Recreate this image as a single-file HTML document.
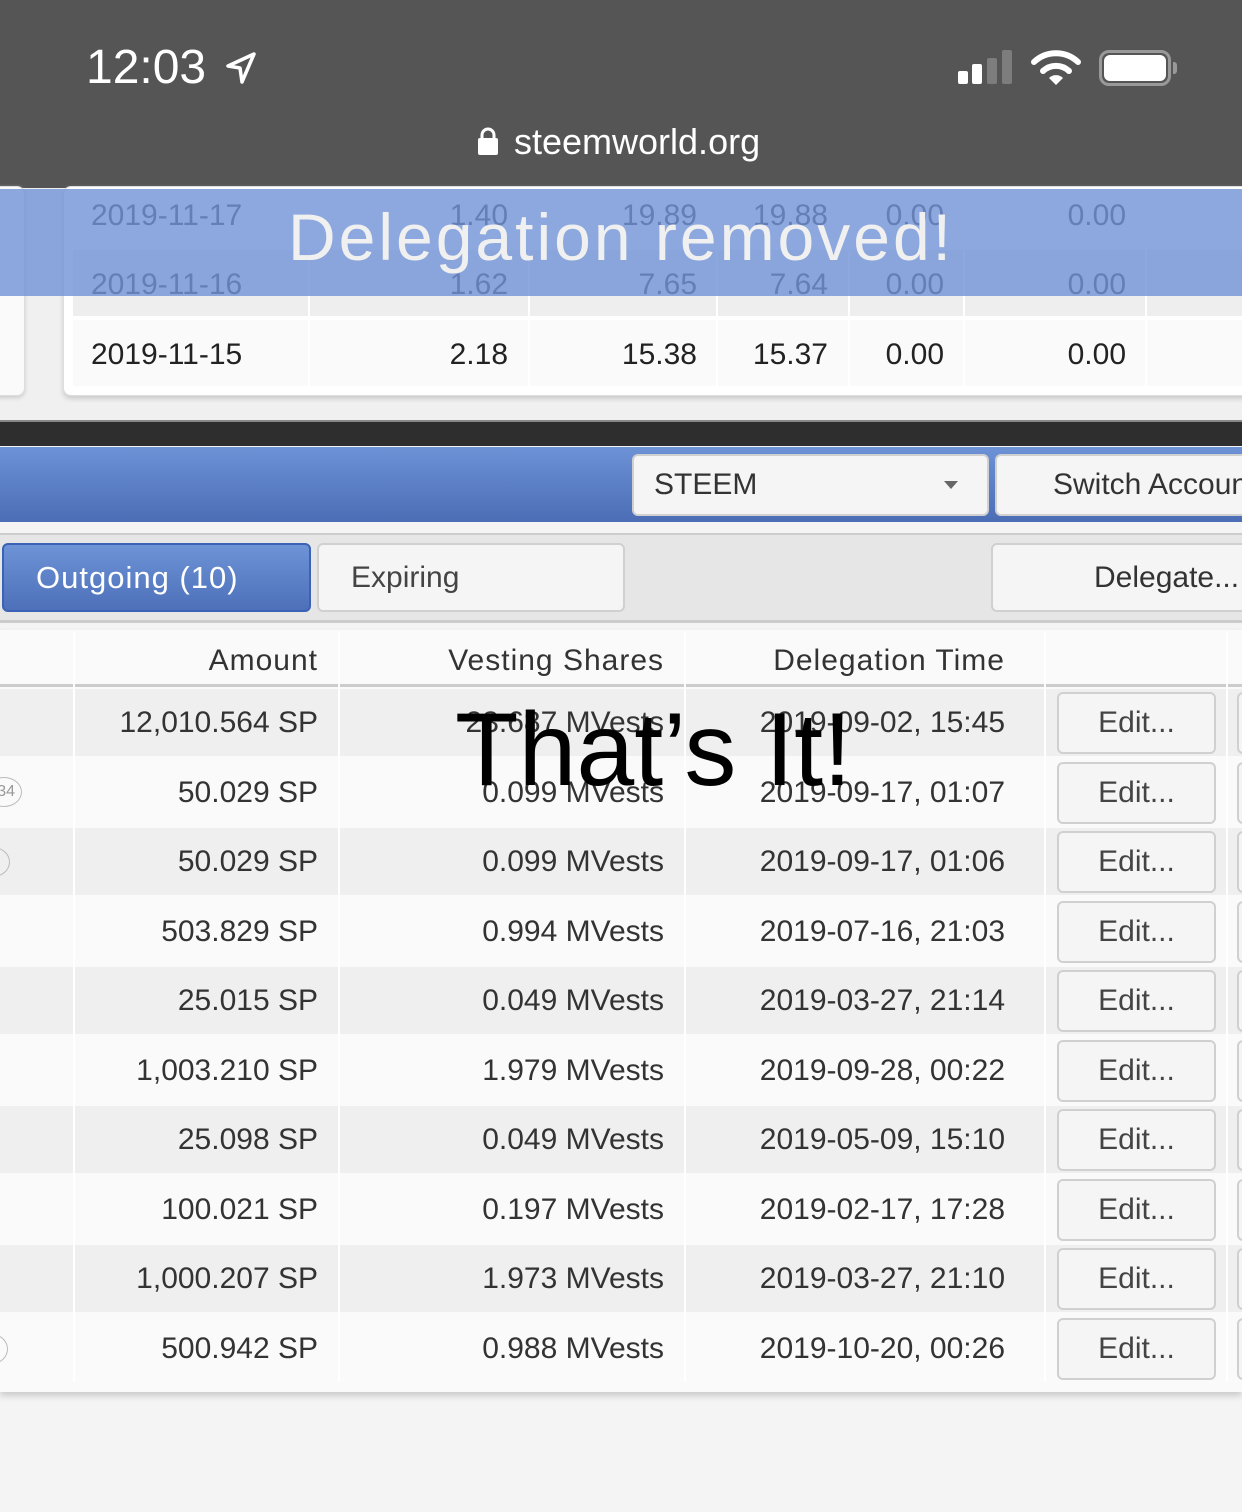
<!DOCTYPE html>
<html><head><meta charset="utf-8"><style>
*{margin:0;padding:0;box-sizing:border-box}
html,body{width:1242px;height:1512px;overflow:hidden}
body{background:#f4f4f4;font-family:"Liberation Sans",sans-serif;position:relative;color:#333}
.a{position:absolute}
.r{position:absolute;text-align:right;font-size:30px;line-height:70px;white-space:nowrap}
.btn{position:absolute;background:#f5f5f5;border:2px solid #d0d0d0;border-radius:6px;font-size:30px;color:#444;text-align:center;overflow:hidden;white-space:nowrap}
.box{position:absolute;left:0;width:1242px;height:760px}
</style></head><body>
<!-- status bar -->
<div class="a" style="left:0;top:0;width:1242px;height:188px;background:#555"></div>
<div class="a" style="left:86px;top:40px;font-size:48px;color:#fff;line-height:56px">12:03</div>
<svg class="a" style="left:224px;top:50px" width="36" height="36" viewBox="0 0 36 36"><path d="M30 4 L4 16 L16 18 L18 32 Z" fill="none" stroke="#fff" stroke-width="3.5" stroke-linejoin="round"/></svg>
<div class="a" style="left:958px;top:71px;width:10px;height:13px;background:#fff;border-radius:2px"></div>
<div class="a" style="left:972px;top:64px;width:10px;height:20px;background:#fff;border-radius:2px"></div>
<div class="a" style="left:987px;top:58px;width:10px;height:26px;background:#7d7d7d;border-radius:2px"></div>
<div class="a" style="left:1002px;top:50px;width:10px;height:34px;background:#7d7d7d;border-radius:2px"></div>
<svg class="a" style="left:1030px;top:48px" width="52" height="38" viewBox="0 0 52 38"><path d="M4 14 A32 32 0 0 1 48 14" fill="none" stroke="#fff" stroke-width="6" stroke-linecap="round"/><path d="M13 23 A19 19 0 0 1 39 23" fill="none" stroke="#fff" stroke-width="6" stroke-linecap="round"/><path d="M19 30 L26 37 L33 30 A10 10 0 0 0 19 30Z" fill="#fff"/></svg>
<div class="a" style="left:1099px;top:50px;width:72px;height:36px;border:3px solid #999;border-radius:10px"></div>
<div class="a" style="left:1104px;top:55px;width:62px;height:26px;background:#fff;border-radius:6px"></div>
<div class="a" style="left:1173px;top:62px;width:4px;height:12px;background:#999;border-radius:0 3px 3px 0"></div>
<svg class="a" style="left:477px;top:126px" width="22" height="30" viewBox="0 0 22 30"><path d="M5 13 V9 A6 6 0 0 1 17 9 V13" fill="none" stroke="#fff" stroke-width="3"/><rect x="1" y="12" width="20" height="17" rx="2" fill="#fff"/></svg>
<div class="a" style="left:514px;top:120px;font-size:36px;color:#fff;line-height:44px">steemworld.org</div>

<!-- top table -->
<div class="a" style="left:0;top:188px;width:1242px;height:232px;background:#f0f0f0"></div>
<div class="a" style="left:-20px;top:186px;width:45px;height:210px;background:#fafafa;border:1px solid #ddd;border-radius:8px;box-shadow:0 2px 4px #ccc"></div>
<div class="a" style="left:63px;top:186px;width:1200px;height:210px;background:#fff;border:1px solid #ddd;border-radius:8px;box-shadow:0 3px 5px #ccc"></div>
<div class="a" style="left:73px;top:250px;width:1169px;height:66px;background:#eee"></div>
<div class="a" style="left:73px;top:320px;width:1169px;height:66px;background:#fafafa"></div>
<div class="a" style="left:308px;top:188px;width:2px;height:200px;background:#fff"></div>
<div class="a" style="left:528px;top:188px;width:2px;height:200px;background:#fff"></div>
<div class="a" style="left:716px;top:188px;width:2px;height:200px;background:#fff"></div>
<div class="a" style="left:848px;top:188px;width:2px;height:200px;background:#fff"></div>
<div class="a" style="left:963px;top:188px;width:2px;height:200px;background:#fff"></div>
<div class="a" style="left:1145px;top:188px;width:2px;height:200px;background:#fff"></div>
<div class="r" style="left:91px;top:181px;text-align:left">2019-11-17</div>
<div class="r" style="right:734px;top:181px">1.40</div>
<div class="r" style="right:545px;top:181px">19.89</div>
<div class="r" style="right:414px;top:181px">19.88</div>
<div class="r" style="right:298px;top:181px">0.00</div>
<div class="r" style="right:116px;top:181px">0.00</div>
<div class="r" style="left:91px;top:250px;text-align:left">2019-11-16</div>
<div class="r" style="right:734px;top:250px">1.62</div>
<div class="r" style="right:545px;top:250px">7.65</div>
<div class="r" style="right:414px;top:250px">7.64</div>
<div class="r" style="right:298px;top:250px">0.00</div>
<div class="r" style="right:116px;top:250px">0.00</div>
<div class="r" style="left:91px;top:320px;text-align:left;color:#222">2019-11-15</div>
<div class="r" style="right:734px;top:320px;color:#222">2.18</div>
<div class="r" style="right:545px;top:320px;color:#222">15.38</div>
<div class="r" style="right:414px;top:320px;color:#222">15.37</div>
<div class="r" style="right:298px;top:320px;color:#222">0.00</div>
<div class="r" style="right:116px;top:320px;color:#222">0.00</div>
<div class="a" style="left:0;top:189px;width:1242px;height:107px;background:rgba(112,146,214,0.8)"></div>
<div class="a" style="left:0;top:195px;width:1242px;text-align:center;font-size:66px;color:#f0f0f0;line-height:84px;letter-spacing:3px">Delegation removed!</div>

<!-- dark bar + blue header -->
<div class="a" style="left:0;top:420px;width:1242px;height:26px;background:#2e2e2e;border-top:2px solid #888"></div>
<div class="a" style="left:0;top:447px;width:1242px;height:75px;background:linear-gradient(#6d92d6,#4b6db5)"></div>
<div class="btn" style="left:632px;top:454px;width:357px;height:62px;line-height:58px;text-align:left;padding-left:20px;color:#333">STEEM</div>
<div class="a" style="left:944px;top:481px;width:0;height:0;border-left:7px solid transparent;border-right:7px solid transparent;border-top:8px solid #666"></div>
<div class="btn" style="left:995px;top:454px;width:247px;height:62px;line-height:58px;text-align:left;padding-left:56px;color:#333;border-right:none;border-radius:6px 0 0 6px">Switch Account</div>

<!-- toolbar -->
<div class="a" style="left:0;top:533px;width:1242px;height:90px;background:#e6e6e6;border-top:2px solid #ccc;border-bottom:3px solid #ccc"></div>
<div class="a" style="left:2px;top:543px;width:309px;height:69px;background:linear-gradient(#6e93d6,#4d70b9);border:2px solid #3b62b5;border-radius:6px;color:#fff;font-size:31px;line-height:66px;padding-left:32px;letter-spacing:1px">Outgoing (10)</div>
<div class="btn" style="left:317px;top:543px;width:308px;height:69px;line-height:66px;text-align:left;padding-left:32px">Expiring</div>
<div class="btn" style="left:991px;top:543px;width:251px;height:69px;line-height:66px;text-align:left;padding-left:101px;color:#333;border-right:none;border-radius:6px 0 0 6px">Delegate...</div>

<!-- main table -->
<div class="a" style="left:0;top:630px;width:1242px;height:762px;background:#fafafa;box-shadow:0 4px 6px #ccc"></div>
<div class="a" style="left:0;top:684px;width:1242px;height:3px;background:#ccc"></div>
<div class="r" style="right:924px;top:626px;color:#333;letter-spacing:1px">Amount</div>
<div class="r" style="right:578px;top:626px;color:#333;letter-spacing:1px">Vesting Shares</div>
<div class="r" style="right:237px;top:626px;color:#333;letter-spacing:1px">Delegation Time</div>

<div class="a" style="left:0;top:689px;width:1242px;height:67px;background:#efefef"></div>
<div class="a" style="left:0;top:828px;width:1242px;height:67px;background:#efefef"></div>
<div class="a" style="left:0;top:967px;width:1242px;height:67px;background:#efefef"></div>
<div class="a" style="left:0;top:1106px;width:1242px;height:67px;background:#efefef"></div>
<div class="a" style="left:0;top:1245px;width:1242px;height:67px;background:#efefef"></div>
<div class="a" style="left:73px;top:632px;width:2px;height:750px;background:#fff"></div>
<div class="a" style="left:338px;top:632px;width:2px;height:750px;background:#fff"></div>
<div class="a" style="left:684px;top:632px;width:2px;height:750px;background:#fff"></div>
<div class="a" style="left:1044px;top:632px;width:2px;height:750px;background:#fff"></div>
<div class="a" style="left:1226px;top:632px;width:2px;height:750px;background:#fff"></div>
<div class="a" style="left:-14px;top:777px;width:36px;height:30px;border:1.5px solid #bbb;border-radius:50%;font-size:16px;color:#999;text-align:right;padding-right:6px;line-height:27px">34</div>
<div class="a" style="left:-24px;top:847px;width:34px;height:30px;border:1.5px solid #bbb;border-radius:50%"></div>
<div class="a" style="left:-24px;top:1334px;width:32px;height:30px;border:1.5px solid #bbb;border-radius:50%"></div>

<div class="box" style="top:688px">
<div class="r" style="right:924px;top:0px">12,010.564 SP</div><div class="r" style="right:578px;top:0px">23.687 MVests</div><div class="r" style="right:237px;top:0px">2019-09-02, 15:45</div>
<div class="r" style="right:924px;top:70px">50.029 SP</div><div class="r" style="right:578px;top:70px">0.099 MVests</div><div class="r" style="right:237px;top:70px">2019-09-17, 01:07</div>
<div class="r" style="right:924px;top:139px">50.029 SP</div><div class="r" style="right:578px;top:139px">0.099 MVests</div><div class="r" style="right:237px;top:139px">2019-09-17, 01:06</div>
<div class="r" style="right:924px;top:209px">503.829 SP</div><div class="r" style="right:578px;top:209px">0.994 MVests</div><div class="r" style="right:237px;top:209px">2019-07-16, 21:03</div>
<div class="r" style="right:924px;top:278px">25.015 SP</div><div class="r" style="right:578px;top:278px">0.049 MVests</div><div class="r" style="right:237px;top:278px">2019-03-27, 21:14</div>
<div class="r" style="right:924px;top:348px">1,003.210 SP</div><div class="r" style="right:578px;top:348px">1.979 MVests</div><div class="r" style="right:237px;top:348px">2019-09-28, 00:22</div>
<div class="r" style="right:924px;top:417px">25.098 SP</div><div class="r" style="right:578px;top:417px">0.049 MVests</div><div class="r" style="right:237px;top:417px">2019-05-09, 15:10</div>
<div class="r" style="right:924px;top:487px">100.021 SP</div><div class="r" style="right:578px;top:487px">0.197 MVests</div><div class="r" style="right:237px;top:487px">2019-02-17, 17:28</div>
<div class="r" style="right:924px;top:556px">1,000.207 SP</div><div class="r" style="right:578px;top:556px">1.973 MVests</div><div class="r" style="right:237px;top:556px">2019-03-27, 21:10</div>
<div class="r" style="right:924px;top:626px">500.942 SP</div><div class="r" style="right:578px;top:626px">0.988 MVests</div><div class="r" style="right:237px;top:626px">2019-10-20, 00:26</div>
</div>

<div class="box" style="top:692px;overflow:hidden">
<div class="btn" style="left:1057px;top:0px;width:159px;height:62px;line-height:58px">Edit...</div><div class="btn" style="left:1237px;top:0px;width:20px;height:62px"></div>
<div class="btn" style="left:1057px;top:70px;width:159px;height:62px;line-height:58px">Edit...</div><div class="btn" style="left:1237px;top:70px;width:20px;height:62px"></div>
<div class="btn" style="left:1057px;top:139px;width:159px;height:62px;line-height:58px">Edit...</div><div class="btn" style="left:1237px;top:139px;width:20px;height:62px"></div>
<div class="btn" style="left:1057px;top:209px;width:159px;height:62px;line-height:58px">Edit...</div><div class="btn" style="left:1237px;top:209px;width:20px;height:62px"></div>
<div class="btn" style="left:1057px;top:278px;width:159px;height:62px;line-height:58px">Edit...</div><div class="btn" style="left:1237px;top:278px;width:20px;height:62px"></div>
<div class="btn" style="left:1057px;top:348px;width:159px;height:62px;line-height:58px">Edit...</div><div class="btn" style="left:1237px;top:348px;width:20px;height:62px"></div>
<div class="btn" style="left:1057px;top:417px;width:159px;height:62px;line-height:58px">Edit...</div><div class="btn" style="left:1237px;top:417px;width:20px;height:62px"></div>
<div class="btn" style="left:1057px;top:487px;width:159px;height:62px;line-height:58px">Edit...</div><div class="btn" style="left:1237px;top:487px;width:20px;height:62px"></div>
<div class="btn" style="left:1057px;top:556px;width:159px;height:62px;line-height:58px">Edit...</div><div class="btn" style="left:1237px;top:556px;width:20px;height:62px"></div>
<div class="btn" style="left:1057px;top:626px;width:159px;height:62px;line-height:58px">Edit...</div><div class="btn" style="left:1237px;top:626px;width:20px;height:62px"></div>
</div>

<div class="a" style="left:455px;top:690px;font-size:104px;line-height:120px;color:#000;white-space:nowrap">That’s It!</div>
</body></html>
